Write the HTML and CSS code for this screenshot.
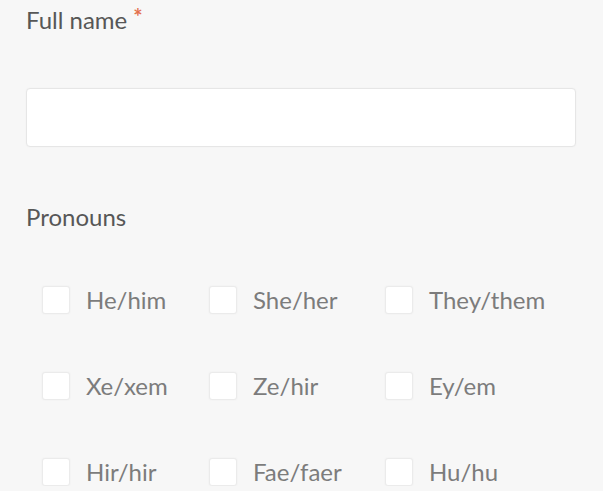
FILE: index.html
```html
<!DOCTYPE html>
<html lang="en">
<head>
  <meta charset="UTF-8">
  <title>Profile form</title>
  <link rel="stylesheet" href="styles.css">
</head>
<body>
  <form class="form">
    <div class="field">
      <label class="field-label" for="fullName">Full name<span class="required">*</span></label>
      <input class="text-input" type="text" id="fullName">
    </div>

    <div class="field">
      <div class="field-label">Pronouns</div>
      <div class="options">
        <label class="option"><input type="checkbox"><span class="box"></span>He/him</label>
        <label class="option"><input type="checkbox"><span class="box"></span>She/her</label>
        <label class="option"><input type="checkbox"><span class="box"></span>They/them</label>

        <label class="option"><input type="checkbox"><span class="box"></span>Xe/xem</label>
        <label class="option"><input type="checkbox"><span class="box"></span>Ze/hir</label>
        <label class="option"><input type="checkbox"><span class="box"></span>Ey/em</label>

        <label class="option"><input type="checkbox"><span class="box"></span>Hir/hir</label>
        <label class="option"><input type="checkbox"><span class="box"></span>Fae/faer</label>
        <label class="option"><input type="checkbox"><span class="box"></span>Hu/hu</label>
      </div>
    </div>
  </form>
</body>
</html>
```

FILE: styles.css
```css
body {
  margin: 0;
  background: #f7f7f7;
  font-family: Lato, "Open Sans", sans-serif;
  color: #555;
  overflow: hidden;
}

.form {
  padding: 0 27px 0 26px;
}

.field-label {
  display: block;
  font-size: 24px;
  line-height: 40px;
  color: #575757;
}

.required {
  display: inline-block;
  color: #e3704f;
  font-size: 22px;
  font-weight: bold;
  vertical-align: top;
  line-height: 22px;
  padding-top: 6px;
  margin-left: 6px;
}

.text-input {
  display: block;
  box-sizing: border-box;
  width: 100%;
  height: 59px;
  margin-top: 48px;
  background: #fff;
  border: 1px solid #e6e6e6;
  border-radius: 4px;
  box-shadow: 0 0 2px rgba(0,0,0,0.04);
  font-size: 18px;
}

.field + .field {
  margin-top: 50px;
}

.options {
  display: grid;
  grid-template-columns: 167px 176px auto;
  row-gap: 57px;
  padding: 48px 0 0 16px;
}

.option {
  display: flex;
  align-items: center;
  gap: 16px;
  font-size: 24px;
  line-height: 29px;
  color: #7c7c7c;
  cursor: pointer;
}

.option input {
  display: none;
}

.box {
  width: 28px;
  height: 28px;
  box-sizing: border-box;
  background: #fff;
  border: 1px solid #ebebeb;
  border-radius: 3px;
  box-shadow: 0 0 2px rgba(0,0,0,0.05);
}
```
